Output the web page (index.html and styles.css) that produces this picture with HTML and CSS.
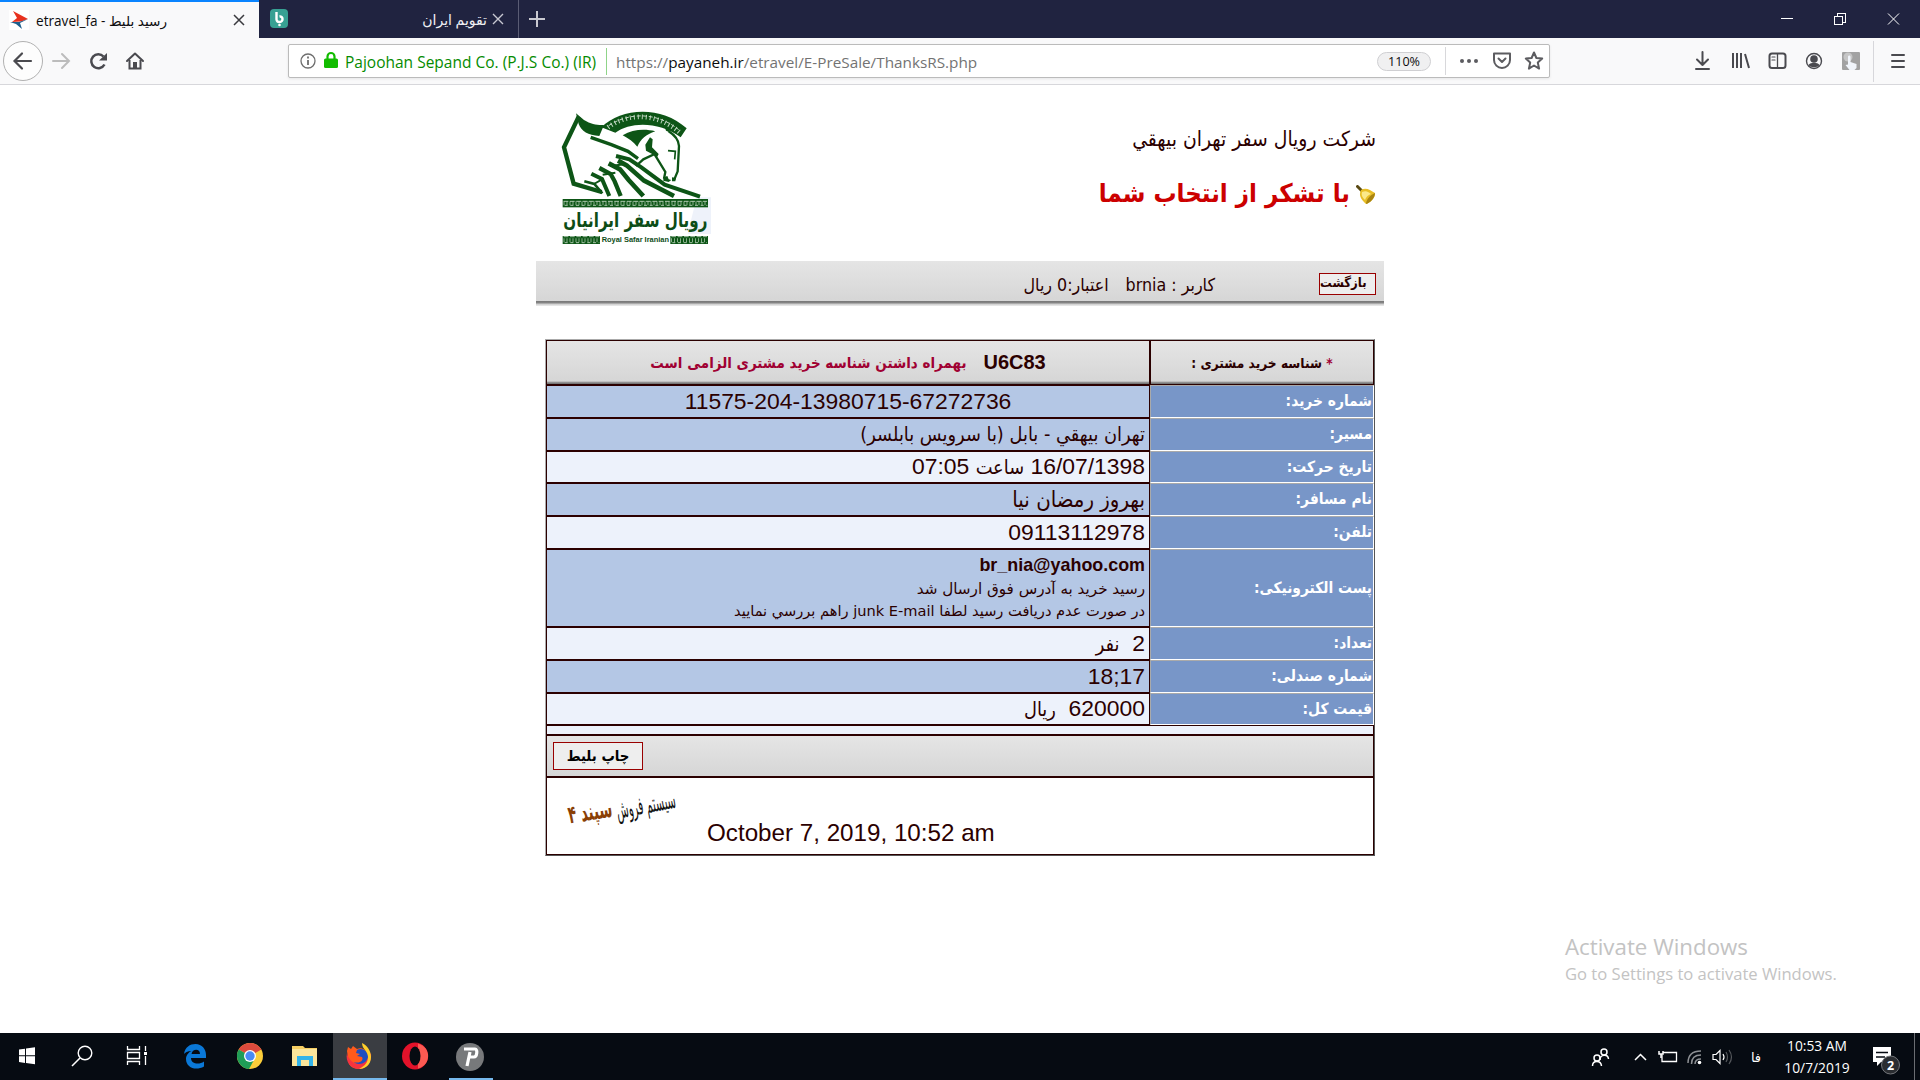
FILE: index.html
```html
<!DOCTYPE html>
<html lang="fa">
<head>
<meta charset="utf-8">
<title>etravel_fa - رسید بلیط</title>
<link rel="stylesheet" href="styles.css">
</head>
<body>
<div class="tabbar">
  <div class="tab active">
    <svg class="fav" viewBox="0 0 20 20"><path fill="#fff" d="M0 0h20v20H0z"/><path d="M4 1l15 8-7 2.500-9 .5 5-4z" fill="#e8311e"/><path d="M1 12h9l9-3-8 4 2 6-6-5z" fill="#1d5f8c"/></svg>
    <span class="tab-title t1">etravel_fa - رسید بلیط</span>
    <svg class="x" viewBox="0 0 12 12"><path d="M1 1l10 10M11 1L1 11" stroke="#3a3a3e" stroke-width="1.5"/></svg>
  </div>
  <div class="tab second">
    <svg class="fav" viewBox="0 0 20 20"><rect x="1" y="0" width="18" height="19" rx="4" fill="#37a093"/><path d="M7.500 3v7.500a3 2.800 0 0 0 6-.5 2.500 2.500 0 0 0-3-2.500" fill="none" stroke="#fff" stroke-width="2.400"/><circle cx="10.500" cy="16" r="1.300" fill="#fff"/></svg>
    <span class="tab-title t2" dir="rtl">تقویم ایران</span>
    <svg class="x" viewBox="0 0 12 12"><path d="M1 1l10 10M11 1L1 11" stroke="#c8c8d2" stroke-width="1.400"/></svg>
  </div>
  <svg class="plus" viewBox="0 0 18 18"><path d="M9 1v16M1 9h16" stroke="#c9c9d1" stroke-width="2"/></svg>
  <svg class="wc" viewBox="0 0 130 20"><g fill="none" stroke="#fff" shape-rendering="crispEdges"><path d="M5 9.500h12"/><path d="M58.500 7.500h8v8h-8zM61 7V4.500h8.500V13H67"/></g><path d="M112 4.500l11 11M123 4.500l-11 11" stroke="#fff"/></svg>
</div>
<div class="toolbar">
  <svg class="nav" viewBox="0 0 160 46"><circle cx="23" cy="23" r="19.500" fill="#fdfdfd" stroke="#b1b1b1"/><path d="M31 23H15M22 15.500L14.500 23l7.500 7.500" fill="none" stroke="#4a4a4f" stroke-width="2.200" stroke-linecap="round"/><path d="M53 23h16M62 16l7 7-7 7" fill="none" stroke="#bcbcbc" stroke-width="2" stroke-linecap="round"/><path d="M104.500 26.500a7 7 0 1 1-1-8" fill="none" stroke="#4a4a4f" stroke-width="2.500"/><path d="M107 15v7.500h-8z" fill="#4a4a4f"/><path d="M127 23l8-7.500 8 7.500" fill="none" stroke="#4a4a4f" stroke-width="2" stroke-linecap="round" stroke-linejoin="round"/><path d="M129.500 22v8.500h11V22" fill="none" stroke="#4a4a4f" stroke-width="2"/><path d="M133 24h4v6h-4z" fill="#4a4a4f"/></svg>
  <div class="urlbar">
    <svg class="info" viewBox="0 0 25 20"><circle cx="9" cy="10" r="7" fill="none" stroke="#6e6e6e" stroke-width="1.300"/><path d="M9 9v5M9 5.500v2" stroke="#6e6e6e" stroke-width="1.800"/></svg>
    <svg class="lock" viewBox="0 0 14 18"><path d="M3.500 9V5.500a3.500 3.500 0 0 1 7 0V9" fill="none" stroke="#12bc00" stroke-width="2.200"/><rect x="0" y="7.500" width="14" height="9.500" rx="1.500" fill="#12bc00"/></svg>
    <span class="owner">Pajoohan Sepand Co. (P.J.S Co.) (IR)</span>
    <span class="url">https://<b>payaneh.ir</b>/etravel/E-PreSale/ThanksRS.php</span>
    <span class="zoom">110%</span>
    <svg class="acts" viewBox="0 0 104 30"><path d="M1.500 1v28" stroke="#d8d8db"/><g fill="#5c5c60"><circle cx="18" cy="15" r="2"/><circle cx="25" cy="15" r="2"/><circle cx="32" cy="15" r="2"/></g><g fill="none" stroke="#5c5c60" stroke-width="2" stroke-linejoin="round" stroke-linecap="round"><path d="M50 7.500h16v6.500a8 8 0 0 1-16 0z"/><path d="M54.500 12.500l3.500 3.500 3.500-3.500"/><path d="M90 6.500l2.400 5.500 5.800.600-4.400 4 1.300 6-5.100-3.100-5.100 3.100 1.300-6-4.400-4 5.800-.600z"/></g></svg>
  </div>
  <svg class="tools" viewBox="0 0 220 46"><g fill="none" stroke="#4a4a4f" stroke-width="2" stroke-linecap="round" stroke-linejoin="round"><path d="M12.500 14v13M7 21.500l5.500 5.500 5.500-5.500M6 31h13"/><path d="M43 15v15M47 15v15M51 15v15M55 16l4 14" stroke-linecap="butt"/><rect x="79.500" y="15.500" width="16" height="14.500" rx="2.500"/><path d="M87.500 16v14" stroke-width="1.300"/><path d="M82 19h3M82 22h3" stroke-width="1.200"/><circle cx="124" cy="23" r="7.500" stroke-width="1.400"/></g><circle cx="124" cy="21" r="3.800" fill="#4a4a4f"/><path d="M118.500 27c2-3 9-3 11 0-2 3-9 3-11 0z" fill="#4a4a4f"/><rect x="152" y="14" width="18" height="18" rx="1" fill="#a2a2a2"/><circle cx="158" cy="19" r="4.500" fill="#c6c6c6"/><path d="M158 19c0-2 2.500-2 2.500 0v5l6 2v4l-2 2h-5l-4-5 2.500-.5z" fill="#f1f5fb"/><path d="M183.500 3v41" stroke="#d7d7db"/><path d="M202 17h12M202 23h12M202 29h12" stroke="#4a4a4f" stroke-width="2" stroke-linecap="round"/></svg>
</div>

<main class="page">
  <header class="head">
    <svg class="logo" viewBox="84 54 459 414">
      <path d="M500 322h43v110h-70z" fill="#eef2fa"/>
      <g fill="#0d5516">
        <path d="M138 70l24 20c22 14 42 16 60 15l-14 33c-34-2-54-14-62-36z"/>
        <path d="M214 112c60-60 180-66 256 3l-18 27c-64-48-150-48-196-14z"/>
        <path d="M278 136c30-18 66-20 98-12-28 9-44 24-54 46-12-14-26-25-44-34z"/>
        <path d="M360 142l8 6-2 24 20 20-4 8-34-18-2-18z"/>
        <rect x="98" y="327" width="436" height="25"/><rect x="98" y="438" width="112" height="24"/><rect x="421" y="438" width="113" height="24"/>
        <path d="M400 262l12-4 4 10 8 2-8 6-16-4zM426 262l12 2-2 10h-10zM402 104l8 4 12 20-14-6z"/>
      </g>
      <g fill="none" stroke="#0d5516" stroke-linejoin="miter">
        <path d="M146 80L102 172l29 109 84 25" stroke-width="13"/>
        <path d="M182 142l62 22 50 20 30 22" stroke-width="10"/>
        <path d="M416 124c22 14 30 26 31 44l-4 76-10 24" stroke-width="7"/>
        <path d="M372 190l34 56-4 20M318 228l22-20 34-16" stroke-width="7"/>
        <path d="M414 182l22 2-2 24" stroke-width="5"/>
        <path d="M258 198l40 10 36 24 70 52 106 36" stroke-width="12"/>
        <path d="M264 212l26 14 52 46 90 46" stroke-width="14"/>
        <path d="M236 220l34 18 26 32 44 48" stroke-width="14"/>
        <path d="M208 234l34 18 12 22 18 44" stroke-width="13"/>
        <path d="M184 251l32 16 22 51" stroke-width="12"/>
        <path d="M163 274l30 8 24 28" stroke-width="8"/>
        <path d="M240 228l50-6M218 254l38-6M192 282l28-16" stroke-width="6"/>
      </g>
      <g fill="none" stroke="#c3d8c3" stroke-width="2.500">
        <path d="M234 112c60-44 146-44 214 14" stroke-width="14" stroke-dasharray="3 9"/><path d="M236 107c60-40 144-42 210 12" stroke-width="3" stroke-dasharray="12 6"/>
        <path d="M101 334h430M101 440h107M424 440h107" stroke-dasharray="14 5"/>
        <path d="M101 340h430M101 451h107M424 451h107" stroke-width="12" stroke-dasharray="2 7"/>
        <path d="M104 346h428M104 458h104M427 458h104" stroke-dasharray="9 8"/>
      </g>
      <g fill="#0d4d17" text-anchor="middle"><text class="lg-fa" x="316" y="411" textLength="432" lengthAdjust="spacingAndGlyphs">رویال سفر ایرانیان</text><text class="lg-en" x="316" y="456" textLength="202" lengthAdjust="spacingAndGlyphs">Royal Safar Iranian</text></g>
    </svg>
    <div class="titles" dir="rtl">
      <div class="company"><span>شركت رويال سفر تهران بيهقي</span></div>
      <div class="thanks"><svg class="bell" viewBox="0 0 20 20"><path d="M1.500 1.500l4 4" stroke="#5a4a14" stroke-width="3" stroke-linecap="round"/><path d="M5 5c5-3 9 0 14 3 1 4-5 10-9 11C6 15 2 11 5 5z" fill="#e8be26"/><path d="M6 7c4-2 7 0 9 2-3 1-5 3-6 6-3-3-4-5-3-8z" fill="#fbe98a"/><path d="M19 8c0 5-5 10-9 11 0-4 4-9 9-11z" fill="#a98411"/></svg><span>با تشكر از انتخاب شما</span></div>
    </div>
  </header>
  <div class="userbar" dir="rtl">
    <span class="btn back"><span>بازگشت</span></span>
    <span class="user">كاربر : brnia</span>
    <span class="credit">اعتبار:0 ریال</span>
  </div>

  <section class="receipt" dir="rtl">
    <div class="row r45"><div class="hd"><span class="idlbl"><i>*</i> شناسه خرید مشتری :</span></div><div class="hd"><b class="code">U6C83</b><span class="must">بهمراه داشتن شناسه خرید مشتری الزامی است</span></div></div>
    <div class="row r33"><div class="lb"><span>شماره خرید:</span></div><div class="v b mid"><span dir="ltr">11575-204-13980715-67272736</span></div></div>
    <div class="row r33"><div class="lb"><span>مسیر:</span></div><div class="v b"><span class="fa route">تهران بيهقي - بابل (با سرويس بابلسر)</span></div></div>
    <div class="row r32"><div class="lb"><span>تاریخ حرکت:</span></div><div class="v"><span class="when">16/07/1398 <span class="fa">ساعت</span> 07:05</span></div></div>
    <div class="row r33"><div class="lb"><span>نام مسافر:</span></div><div class="v b"><span class="fa name">بهروز رمضان نيا</span></div></div>
    <div class="row r33"><div class="lb"><span>تلفن:</span></div><div class="v"><span>09113112978</span></div></div>
    <div class="row r78"><div class="lb"><span>پست الکترونیکی:</span></div><div class="v b mail"><b>br_nia@yahoo.com</b><span class="n1">رسيد خريد به آدرس فوق ارسال شد</span><span class="n2">در صورت عدم دريافت رسيد لطفا junk E-mail راهم بررسي نماييد</span></div></div>
    <div class="row r33"><div class="lb"><span>تعداد:</span></div><div class="v"><span>2&nbsp; <span class="fa">نفر</span></span></div></div>
    <div class="row r33"><div class="lb"><span>شماره صندلی:</span></div><div class="v b"><span dir="ltr">18;17</span></div></div>
    <div class="row r32"><div class="lb"><span>قیمت کل:</span></div><div class="v"><span>620000&nbsp; <span class="fa">ريال</span></span></div></div>
    <div class="full gap"></div>
    <div class="full printrow"><span class="btn print"><span>چاپ بلیط</span></span></div>
    <div class="full foot" dir="ltr">
      <svg class="brand" viewBox="85 540 330 130"><text transform="translate(234 618) rotate(-11)" textLength="182" lengthAdjust="spacingAndGlyphs" fill="#111">سیستم فروش</text><text transform="translate(88 632) rotate(-9)" textLength="134" lengthAdjust="spacingAndGlyphs" fill="#8a3f05" font-weight="bold">سپند ۴</text></svg>
      <span class="date">October 7, 2019, 10:52 am</span>
    </div>
  </section>
  <aside class="activate"><div>Activate Windows</div><p>Go to Settings to activate Windows.</p></aside>
</main>

<footer class="taskbar">
  <span class="tk"><svg viewBox="0 0 30 30"><path d="M7 8.500l6-.8v6.600H7zM14 7.500l9-1.300v8.100h-9zM7 15.300h6v6.600l-6-.8zM14 15.300h9v8l-9-1.200z" fill="#fff"/></svg></span>
  <span class="tk"><svg viewBox="0 0 30 30"><circle cx="18" cy="12" r="6.800" fill="none" stroke="#fff" stroke-width="1.400"/><path d="M13 17l-8 8" stroke="#fff" stroke-width="1.600"/></svg></span>
  <span class="tk"><svg viewBox="0 0 30 30"><path d="M5.500 5v3.500h12V5M5.500 24v-3.500h12V24M5.500 11.500h12v6h-12zM23.500 5v5M23.500 15v9" fill="none" stroke="#fff" stroke-width="1.300"/><path d="M22 11h3v3h-3z" fill="#fff"/></svg></span>
  <span class="tk edge"><svg viewBox="0 0 30 30"><path d="M4 13C5 6 10 3 15.500 3 22 3 26 8 26 14v3H11c0 6 8 7 13 3.500v5C16 30 6 27 6 18c0-4 3-7 5.500-8C7.500 10 5 11.500 4 13zm7.500 0h8.500c0-6-8-5-8.500 0z" fill="#0a78d7"/></svg></span>
  <span class="tk"><svg viewBox="0 0 30 30"><circle cx="15" cy="15" r="13" fill="#fbce3a"/><path d="M15 15L3.700 8.500a13 13 0 0 1 22.600 0z" fill="#dc4a3d"/><path d="M15 15L3.700 8.500A13 13 0 0 0 14 28l5-9z" fill="#1f9d57"/><path d="M15 9h11.500L24 6z" fill="#dc4a3d"/><circle cx="15" cy="15" r="6" fill="#fff"/><circle cx="15" cy="15" r="4.700" fill="#4a8bf5"/></svg></span>
  <span class="tk"><svg viewBox="0 0 30 30"><path d="M2 5h11l2 2h12v18H2z" fill="#f6cf63"/><path d="M2 8h25v17H2z" fill="#fbe69b"/><path d="M7 25V15h16v10h-4v-6h-8v6z" fill="#32b4ea"/></svg></span>
  <span class="tk on"><svg viewBox="0 0 30 30"><path d="M3 10l1-4 3 2 2-3 4 3c5-2 9 1 11 6v9c-3 6-15 7-19 0z" fill="#ff5a1c"/><path d="M13 9c5-3 12 1 11 8s-10 9-14 4c6 2 10-2 8-5l-5-1 3-2-4-1z" fill="#1f4fc0"/><path d="M3 12c1 6 6 11 12 11 5 0 8-3 9-7l3-4c1 9-4 16-12 16S1 21 3 12z" fill="#f5333f"/><path d="M18 2c5 2 9 8 9 14 0 8-6 12-12 12 6-3 9-7 9-12 0-6-6-8-6-14z" fill="#ffcf2b"/></svg></span>
  <span class="tk"><svg viewBox="0 0 30 30"><ellipse cx="15" cy="15" rx="13" ry="13.500" fill="#e3122a"/><path d="M18 2.500c14 4 13 22 0 25z" fill="#fb5a52"/><ellipse cx="15" cy="15" rx="5.500" ry="9.500" fill="#060b12"/></svg></span>
  <span class="tk run"><svg viewBox="0 0 30 30"><circle cx="15" cy="15" r="14" fill="#77797b"/><path d="M12 24l3-14M9 7h11c3 0 2 8-1 8h-6" fill="none" stroke="#fff" stroke-width="3.200"/></svg></span>
  <svg class="tray" viewBox="0 0 150 46"><g fill="none" stroke="#fff" stroke-width="1.500"><circle cx="19" cy="18" r="3"/><path d="M15 26c0-6 8-6 8.500-1"/><circle cx="12" cy="24" r="3"/><path d="M7.500 32c0-6 8.500-6 9 0"/><path d="M50 26l5.500-5.500L61 26"/><path d="M78 18.500h13.500v9H77v-7M91.500 21v4" stroke-width="1.300"/><path d="M74 17v3h4v-3M76 20v4" stroke-width="1.500"/><g stroke="#8d9094"><path d="M103 29c0-8 5-12 13-12M106.500 30c0-6 3-9 9.500-9M110 30c0-3.500 2-5 6-5"/></g><path d="M128 20.500v5h3l4 4V16.500l-4 4z" stroke-width="1.200"/><path d="M138 20q2 3 0 6" stroke-width="1.200"/><path d="M141 18q3 5 0 10M144 16q5 7 0 14" stroke="#55585c" stroke-width="1.200"/></g><circle cx="114.500" cy="28.500" r="1.800" fill="#fff"/></svg>
  <span class="lang">فا</span>
  <span class="clock"><span>10:53 AM</span><span>10/7/2019</span></span>
  <svg class="note" viewBox="0 0 44 46"><path d="M8 13h18v15H16l-4 4v-4H8z" fill="#fff"/><path d="M11 18.500h12M11 23h9" stroke="#060b12" stroke-width="1.300"/><circle cx="25.500" cy="31" r="9" fill="#2a2d31" stroke="#73767a"/><text x="25.500" y="35.500" text-anchor="middle" font-size="12.500" font-weight="bold" fill="#fff">2</text></svg>
  <span class="edgebar"></span>
</footer>
</body>
</html>
```
FILE: styles.css
```css
* { box-sizing: border-box; }
body { margin: 0; width: 1920px; height: 1080px; overflow: hidden; display: flex; flex-direction: column; background: #fff; font-family: "Open Sans", "DejaVu Sans", sans-serif; }
svg { display: block; flex: none; }
span, b { white-space: nowrap; }

.tabbar { height: 38px; background: #202340; display: flex; align-items: center; }
.tab { height: 38px; display: flex; align-items: center; font-size: 14px; }
.tab.active { width: 259px; background: #f9f9fa; border-top: 2px solid #0a84ff; padding: 0 14px 0 9px; color: #0c0c0d; font-size: 13.6px; }
.tab.second { width: 260px; border-right: 1px solid #5a5c74; padding: 0 14px 0 10px; color: #f0f0f4; }
.fav { width: 20px; height: 20px; margin-right: 7px; }
.tab-title { flex: 1; }
.t2 { direction: ltr; text-align: right; margin-right: 5px; }
.x { width: 12px; height: 12px; }
.plus { width: 18px; height: 18px; margin-left: 9px; }
.wc { width: 130px; height: 20px; margin-left: auto; margin-right: 14px; }

.toolbar { height: 47px; background: #f9f9fa; border-bottom: 1px solid #d7d7db; display: flex; align-items: center; }
.nav { width: 160px; height: 46px; }
.urlbar { margin-left: 128px; width: 1262px; height: 34px; background: #fff; border: 1px solid #bbb; border-radius: 2px; box-shadow: 0 1px 3px rgba(0,0,0,.08); display: flex; align-items: center; padding-left: 10px; font-size: 15.3px; }
.info { width: 25px; height: 20px; }
.lock { width: 14px; height: 18px; margin-top: -3px; }
.owner { color: #058b00; margin-left: 7px; width: 262px; border-right: 1px solid #8fd488; line-height: 26px; font-size: 15.5px; }
.url { margin-left: 9px; color: #737373; flex: 1; padding-top: 2px; }
.url b { font-weight: 400; color: #0c0c0d; }
.owner { padding-top: 1px; }
.zoom { width: 54px; height: 19px; border: 1px solid #cfcfd2; border-radius: 10px; background: #f0f0f1; font-size: 12.6px; line-height: 18px; text-align: center; color: #0c0c0d; }
.acts { width: 104px; height: 30px; margin-left: 13px; margin-right: 1px; }
.tools { width: 220px; height: 46px; margin-left: auto; margin-right: 10px; }

.page { height: 948px; display: flex; flex-direction: column; align-items: center; position: relative; color: #2b0000; }
.head { width: 848px; height: 176px; display: flex; justify-content: space-between; padding: 23px 8px 0 22px; }
.logo { width: 153px; height: 138px; overflow: visible; }
.lg-fa { font: bold 60px "DejaVu Sans"; }
.lg-en { font: bold 22px "Liberation Sans"; }
.titles { display: flex; flex-direction: column; }
.company { font-size: 20.9px; font-family: "DejaVu Sans Condensed", "DejaVu Sans"; height: 60px; line-height: 62px; }
.thanks { font-size: 25.6px; font-weight: bold; font-family: "DejaVu Sans Condensed", "DejaVu Sans"; color: #c00; display: flex; align-items: center; height: 50px; gap: 6px; }
.bell { width: 20px; height: 20px; margin-top: 4px; }
.userbar { width: 848px; height: 45px; background: linear-gradient(#e5e5e5, #d6d6d6 40px, #777 40px, #888 42px, #ccc 43px, #eee 45px); display: flex; padding: 12px 8px 0; font-size: 17.7px; line-height: 24px; font-family: "DejaVu Sans Condensed", "DejaVu Sans"; }
.btn { border: 1px solid #900; background: #eee; font: bold 13px "DejaVu Sans Condensed", "DejaVu Sans"; display: flex; align-items: center; justify-content: center; }
.back { width: 57px; height: 22px; justify-content: flex-end; padding-bottom: 3px; }
.user { margin-right: 104px; }
.credit { margin-right: 17px; }

.receipt { width: 830px; margin-top: 33px; border: 1px solid #aaa; border-right-color: #555; border-bottom-color: #555; font-family: "Liberation Sans", "DejaVu Sans"; font-size: 22.9px; }
.row { display: grid; grid-template-columns: 224px 604px; }
.r45 { height: 45px; }
.r33 { height: 33px; }
.r32 { height: 32px; }
.r78 { height: 78px; }
.hd, .v, .full { border: 1px solid #2b0000; display: flex; align-items: center; }
.hd { justify-content: center; gap: 17px; background: linear-gradient(#e5e5e5, #d6d6d6 40px, #aaa 41px, #777 42px); }
.idlbl { font: bold 13.6px "DejaVu Sans Condensed", "DejaVu Sans"; }
.idlbl i, .must { color: #a00032; font-style: normal; }
.code { font-size: 20px; }
.must { font: bold 15px "DejaVu Sans Condensed", "DejaVu Sans"; }
.lb { background: #7896c8; border: 1px solid #aaa; border-right-color: #fff; border-bottom-color: #fff; color: #fff; font: bold 15.4px "DejaVu Sans Condensed", "DejaVu Sans"; display: flex; align-items: center; padding-right: 1px; padding-bottom: 1px; }
.v { background: #edf2fb; padding-right: 4px; padding-bottom: 1px; }
.v.b { background: #b4c7e5; }
.mid { justify-content: center; padding-right: 0; }
.fa { font-family: "DejaVu Sans Condensed", "DejaVu Sans"; font-size: 19.8px; }
.name { font-size: 22px; }
.mail { flex-direction: column; align-items: flex-start; justify-content: center; padding-bottom: 3px; }
.mail b { font-size: 17.9px; line-height: 26px; }
.n1, .n2 { font: 15.2px/22px "DejaVu Sans"; }
.n2 { font-size: 14.6px; }
.gap { height: 10px; background: #edf2fb; }
.printrow { height: 42px; background: linear-gradient(#e5e5e5, #d6d6d6); justify-content: flex-end; padding-left: 6px; }
.print { width: 90px; height: 28px; font-size: 14.8px; color: #000; padding-bottom: 2px; }
.foot { height: 78px; padding: 0 0 0 21px; }
.brand { width: 110px; height: 43px; margin-bottom: 4px; overflow: visible; font: 74px "DejaVu Sans"; }
.date { margin-left: 29px; margin-top: 34px; font-size: 24.2px; }

.activate { position: absolute; left: 1565px; top: 846px; color: #c3c3c3; }
.activate div { font-size: 22.3px; line-height: 32px; }
.activate p { margin: 0; font-size: 16.6px; line-height: 21px; }

.taskbar { height: 47px; background: #060b12; display: flex; align-items: center; color: #fff; font-size: 13.8px; }
.tk { width: 55px; height: 47px; display: flex; align-items: center; justify-content: center; border-bottom: 2px solid transparent; }
.tk svg { width: 30px; height: 30px; margin: 1px 2px 0 0; }
.edge { margin-left: 3px; }
.on { background: #3a3d42; border-bottom-color: #76b9ed; width: 54px; margin-right: 1px; }
.run { background: linear-gradient(#76b9ed, #76b9ed) 50% 100% / 44px 2px no-repeat; border-bottom: 0; }
.tray { width: 150px; height: 46px; margin-left: auto; margin-right: 6px; }
.lang { width: 30px; text-align: center; font-size: 13px; }
.clock { width: 94px; padding-right: 2px; display: flex; flex-direction: column; align-items: center; line-height: 22px; }
.note { width: 44px; height: 46px; font-family: "Open Sans"; margin-right: 5px; }
.edgebar { width: 6px; height: 47px; border-left: 1px solid #6a6d72; }
```
